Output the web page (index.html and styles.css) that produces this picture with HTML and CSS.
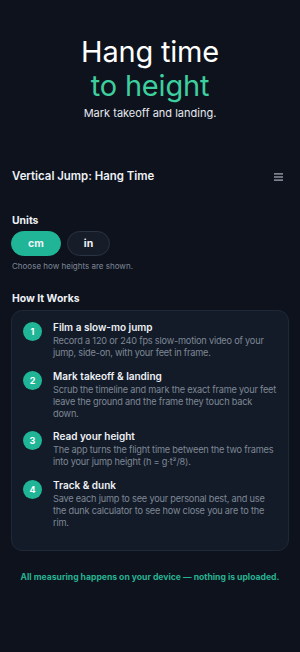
FILE: index.html
```html
<!DOCTYPE html>
<html>
<head>
<meta charset="utf-8">
<link rel="stylesheet" href="styles.css">
</head>
<body>
<div class="page">
  <header class="hero">
    <h1 class="hero-title">Hang time<br><span class="accent">to height</span></h1>
    <p class="hero-sub">Mark takeoff and landing.</p>
  </header>

  <div class="topbar">
    <h2 class="app-title">Vertical Jump: Hang Time</h2>
    <svg class="menu" width="9" height="8" viewBox="0 0 9 8"><rect x="0" y="0.3" width="9" height="1.2" fill="#aab2bf"/><rect x="0" y="3.4" width="9" height="1.2" fill="#aab2bf"/><rect x="0" y="6.5" width="9" height="1.2" fill="#aab2bf"/></svg>
  </div>

  <section class="units">
    <h3 class="section-title">Units</h3>
    <div class="seg">
      <button class="pill active">cm</button>
      <button class="pill">in</button>
    </div>
    <p class="hint">Choose how heights are shown.</p>
  </section>

  <section class="how">
    <h3 class="section-title">How It Works</h3>
    <div class="card">
      <div class="step">
        <div class="num">1</div>
        <div class="step-body">
          <div class="step-title">Film a slow-mo jump</div>
          <div class="step-desc">Record a 120 or 240 fps slow-motion video of your jump, side-on, with your feet in frame.</div>
        </div>
      </div>
      <div class="step">
        <div class="num">2</div>
        <div class="step-body">
          <div class="step-title">Mark takeoff &amp; landing</div>
          <div class="step-desc">Scrub the timeline and mark the exact frame your feet leave the ground and the frame they touch back down.</div>
        </div>
      </div>
      <div class="step">
        <div class="num">3</div>
        <div class="step-body">
          <div class="step-title">Read your height</div>
          <div class="step-desc">The app turns the flight time between the two frames into your jump height (h = g·t²/8).</div>
        </div>
      </div>
      <div class="step">
        <div class="num">4</div>
        <div class="step-body">
          <div class="step-title">Track &amp; dunk</div>
          <div class="step-desc">Save each jump to see your personal best, and use the dunk calculator to see how close you are to the rim.</div>
        </div>
      </div>
    </div>
  </section>

  <p class="footer">All measuring happens on your device — nothing is uploaded.</p>
</div>
</body>
</html>
```
FILE: styles.css
```css
* { box-sizing: border-box; }
html, body { margin: 0; padding: 0; }
body {
  background: #0d121d;
  font-family: Inter, "Noto Sans", sans-serif;
  color: #f1f3f6;
  width: 300px;
  height: 652px;
  overflow: hidden;
}
.page { padding: 0 11px; }
.hero { text-align: center; padding-top: 35px; }
.hero-title {
  margin: 0;
  font-size: 29px;
  font-weight: 400;
  line-height: 34px;
  letter-spacing: -0.2px;
  color: #ffffff;
}
.accent { color: #3dcf9d; }
.hero-sub {
  margin: 3px 0 0;
  font-size: 11px;
  color: #e6e9ee;
  line-height: 15px;
}
.topbar {
  display: flex;
  align-items: center;
  justify-content: space-between;
  margin-top: 48px;
  padding: 0 0 0 1px;
}
.app-title {
  margin: 0;
  font-size: 11.4px;
  font-weight: 600;
  line-height: 15px;
  color: #eef1f5;
}
.menu { margin-right: 6px; }
.units { margin-top: 30px; }
.section-title {
  margin: 0 0 0 1px;
  font-size: 10.4px;
  font-weight: 700;
  line-height: 13px;
  color: #eef1f5;
}
.seg { display: flex; gap: 6px; margin-top: 4px; }
.pill {
  height: 25px;
  border-radius: 13px;
  font-family: inherit;
  font-size: 10.5px;
  font-weight: 700;
  color: #f1f3f6;
  border: 1px solid #2a3342;
  background: #161d29;
  padding: 0;
  width: 43px;
}
.pill.active {
  background: #1fb596;
  border-color: #1fb596;
  width: 50px;
}
.hint {
  margin: 5px 0 0 1px;
  font-size: 8px;
  color: #7f8896;
  line-height: 11px;
}
.how { margin-top: 20px; }
.card {
  margin-top: 5px;
  background: #131b28;
  border: 1px solid #1f2937;
  border-radius: 11px;
  padding: 10px 11px 21px 11px;
  display: flex;
  flex-direction: column;
  gap: 10.5px;
}
.step { display: flex; align-items: flex-start; gap: 11px; }
.num {
  flex: none;
  width: 19px;
  height: 19px;
  border-radius: 50%;
  background: #1fb596;
  color: #fff;
  font-size: 9px;
  font-weight: 700;
  display: flex;
  align-items: center;
  justify-content: center;
  margin-top: 1px;
}
.step-title {
  font-size: 10px;
  font-weight: 600;
  line-height: 13px;
  color: #eef1f5;
}
.step-desc {
  font-size: 9.2px;
  letter-spacing: -0.2px;
  line-height: 12px;
  color: #7e8795;
  margin-top: 1px;
}
.footer {
  margin: 21px 0 0;
  text-align: center;
  font-size: 8.6px;
  font-weight: 700;
  color: #27b291;
  white-space: nowrap;
}
```
